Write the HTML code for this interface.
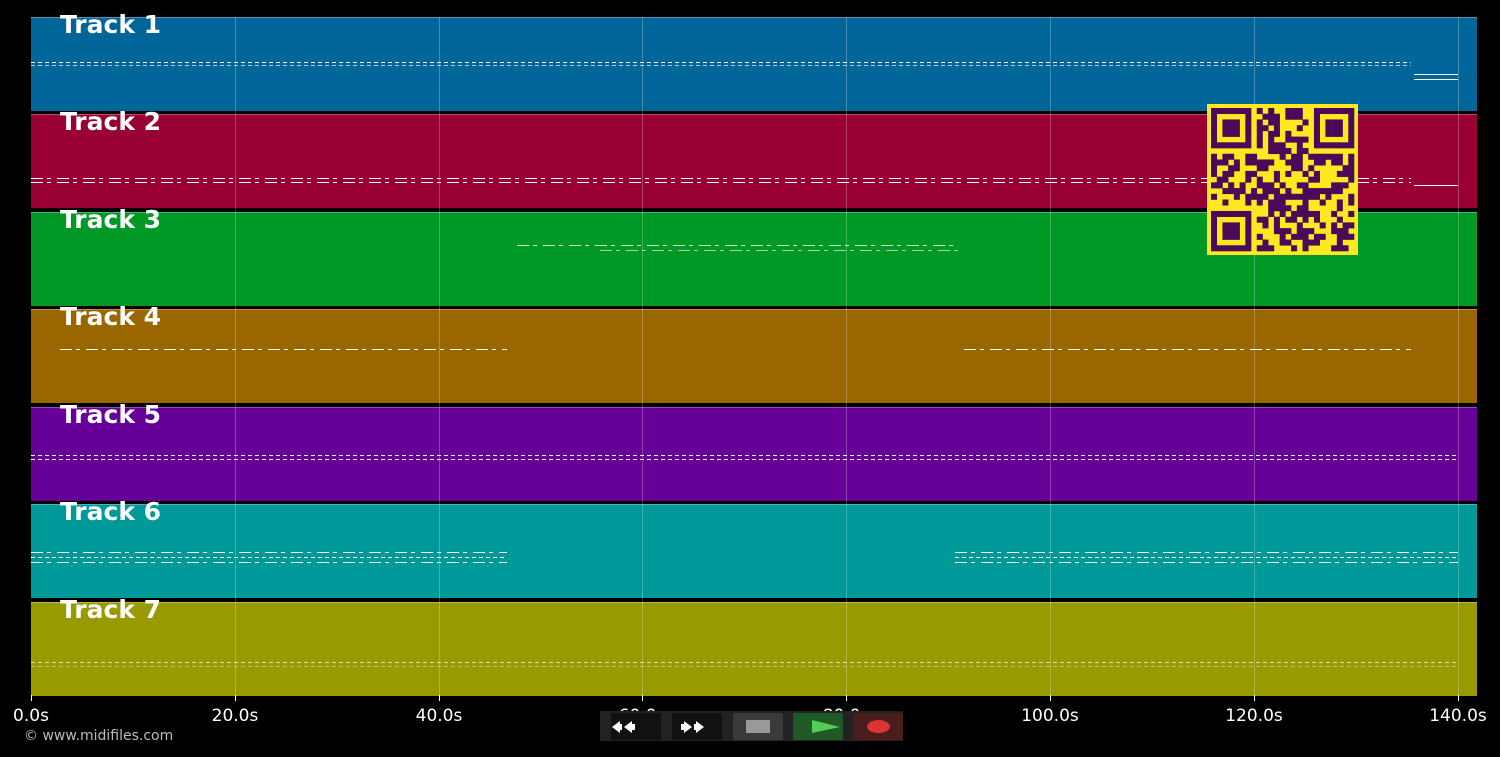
<!DOCTYPE html>
<html><head><meta charset="utf-8"><style>
body{margin:0;width:1500px;height:757px;background:#000;position:relative;overflow:hidden;font-family:"DejaVu Sans","Liberation Sans",sans-serif}
.tr{position:absolute;left:31px;width:1446px;height:93px;border-top:1px solid rgba(255,255,255,0.3)}
.lbl{position:absolute;left:60px;color:#fff;font-weight:bold;font-size:25px;line-height:1}
.g{position:absolute;top:17px;height:678px;width:1px;background:rgba(255,255,255,0.25)}
.n{position:absolute;height:1px;background:repeating-linear-gradient(90deg,#fff 0 4px,transparent 4px 7px)}
.n2{position:absolute;height:1px;background:repeating-linear-gradient(90deg,#fff 0 12px,transparent 12px 16px,#fff 16px 20px,transparent 20px 26px)}
.ax{position:absolute;top:706px;color:#fff;font-size:17px;transform:translateX(-50%)}
.tk{position:absolute;top:695px;width:1px;height:6px;background:#fff}
.btn{position:absolute;top:713px;height:27px;width:50px;border-radius:2px}
</style></head><body>
<div class="tr" style="top:17px;background:#006699"></div>
<div class="tr" style="top:114px;background:#990033"></div>
<div class="tr" style="top:212px;background:#009926"></div>
<div class="tr" style="top:309px;background:#996600"></div>
<div class="tr" style="top:407px;background:#660099"></div>
<div class="tr" style="top:504px;background:#009999"></div>
<div class="tr" style="top:602px;background:#999900"></div>

<div class="g" style="left:235px"></div><div class="g" style="left:439px"></div><div class="g" style="left:642px"></div><div class="g" style="left:846px"></div><div class="g" style="left:1050px"></div><div class="g" style="left:1254px"></div><div class="g" style="left:1458px"></div>

<div class="n" style="left:31px;top:62px;width:1380px"></div>
<div class="n" style="left:31px;top:65px;width:1380px;opacity:.7"></div>
<div class="n" style="left:1414px;top:74px;width:44px;background:#fff"></div>
<div class="n" style="left:1414px;top:79px;width:44px;background:#fff"></div>
<div class="n2" style="left:31px;top:178px;width:1380px"></div>
<div class="n2" style="left:31px;top:182px;width:1380px"></div>
<div class="n" style="left:1414px;top:185px;width:44px;background:#fff"></div>
<div class="n2" style="left:517px;top:245px;width:440px;opacity:.8"></div>
<div class="n2" style="left:600px;top:250px;width:360px;opacity:.6"></div>
<div class="n2" style="left:60px;top:349px;width:447px"></div>
<div class="n2" style="left:964px;top:349px;width:447px"></div>
<div class="n" style="left:31px;top:455px;width:1425px"></div>
<div class="n" style="left:31px;top:459px;width:1425px"></div>
<div class="n2" style="left:31px;top:552px;width:476px"></div>
<div class="n" style="left:31px;top:557px;width:476px"></div>
<div class="n2" style="left:31px;top:562px;width:476px"></div>
<div class="n2" style="left:955px;top:552px;width:503px"></div>
<div class="n" style="left:955px;top:557px;width:503px"></div>
<div class="n2" style="left:955px;top:562px;width:503px"></div>
<div class="n" style="left:31px;top:662px;width:1425px;opacity:.7"></div>
<div class="n" style="left:31px;top:666px;width:1425px;opacity:.4"></div>

<div class="lbl" style="top:12px">Track 1</div>
<div class="lbl" style="top:109px">Track 2</div>
<div class="lbl" style="top:207px">Track 3</div>
<div class="lbl" style="top:304px">Track 4</div>
<div class="lbl" style="top:402px">Track 5</div>
<div class="lbl" style="top:499px">Track 6</div>
<div class="lbl" style="top:597px">Track 7</div>

<svg id="qr" style="position:absolute;left:1207px;top:104px" width="151" height="151" viewBox="0 0 151 151"><rect width="151" height="151" fill="#ffe81f"/></svg>

<div class="tk" style="left:31px"></div><div class="tk" style="left:235px"></div><div class="tk" style="left:439px"></div><div class="tk" style="left:642px"></div><div class="tk" style="left:846px"></div><div class="tk" style="left:1050px"></div><div class="tk" style="left:1254px"></div><div class="tk" style="left:1458px"></div>
<div class="ax" style="left:31px">0.0s</div><div class="ax" style="left:235px">20.0s</div><div class="ax" style="left:439px">40.0s</div><div class="ax" style="left:642px">60.0s</div><div class="ax" style="left:846px">80.0s</div><div class="ax" style="left:1050px">100.0s</div><div class="ax" style="left:1254px">120.0s</div><div class="ax" style="left:1458px">140.0s</div>
<div style="position:absolute;left:24px;top:728px;color:#bbb;font-size:14px">© www.midifiles.com</div>

<div style="position:absolute;left:600px;top:711px;width:303px;height:30px;background:#222"></div>
<div class="btn" style="left:611px;background:#111"><svg width="50" height="27"><path d="M1 14l8-6v3h2v6h-2v3zM13 14l8-6v3h3v6h-3v3z" fill="#fff"/></svg></div>
<div class="btn" style="left:672px;background:#111"><svg width="50" height="27"><path d="M20 14l-8-6v3h-3v6h3v3zM32 14l-8-6v3h-2v6h2v3z" fill="#fff"/></svg></div>
<div class="btn" style="left:733px;background:#3a3a3a"><div style="position:absolute;left:13px;top:7px;width:24px;height:13px;background:#999"></div></div>
<div class="btn" style="left:793px;background:#1f5a26"><svg width="50" height="27"><path d="M19 7L47 14L19 20z" fill="#5c5"/></svg></div>
<div class="btn" style="left:853px;background:#4a1c1c"><div style="position:absolute;left:14px;top:7px;width:23px;height:13px;border-radius:50%;background:#d33"></div></div>

<script>
(function(){var s=document.getElementById('qr'),N=25,m=5.72,o=4,seed=987654321,h='';
function r(){seed^=seed<<13;seed^=seed>>>17;seed^=seed<<5;return ((seed>>>0)%10000)/10000}
function inF(x,y){return (x<8&&y<8)||(x>16&&y<8)||(x<8&&y>16)}
for(var y=0;y<N;y++)for(var x=0;x<N;x++){var on;
 if(inF(x,y)){var fx=x<8?x:x-18,fy=y<8?y:y-18;if(fx<0||fy<0||fx>6||fy>6)on=false;else on=(fx==0||fx==6||fy==0||fy==6)||(fx>=2&&fx<=4&&fy>=2&&fy<=4);}
 else on=r()<0.5;
 if(on)h+='<rect x="'+(o+x*m)+'" y="'+(o+y*m)+'" width="'+(m+0.3)+'" height="'+(m+0.3)+'" fill="#4a0a5a"/>';}
s.innerHTML+=h;})();
</script>
</body></html>
